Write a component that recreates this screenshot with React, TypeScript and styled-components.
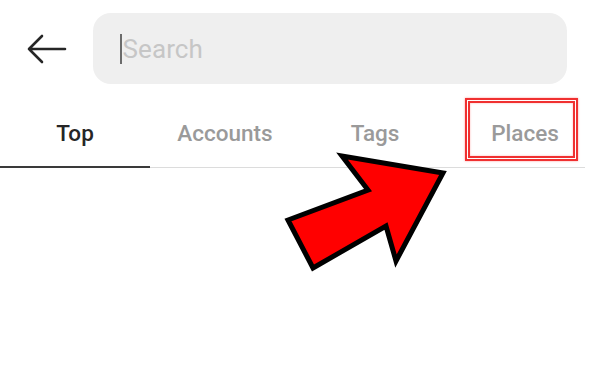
import React from "react";
import styled, { createGlobalStyle } from "styled-components";

const Global = createGlobalStyle`
  html, body { margin: 0; padding: 0; background: #ffffff; }
  body { font-family: Roboto, "Noto Sans", "Liberation Sans", sans-serif; }
`;

const Page = styled.div`
  position: relative;
  width: 600px;
  height: 390px;
  overflow: hidden;
  background: #ffffff;
`;

const Header = styled.div`
  display: flex;
  align-items: center;
  padding: 13px 33px 0 26px;
  height: 71px;
`;

const BackButton = styled.div`
  width: 42px;
  height: 30px;
  display: flex;
  align-items: center;
  margin-right: 25px;
`;

const SearchBox = styled.div`
  flex: 1;
  height: 71px;
  background: #efefef;
  border-radius: 18px;
  display: flex;
  align-items: center;
  padding-left: 27px;
  box-sizing: border-box;
`;

const Caret = styled.span`
  width: 1.5px;
  height: 30px;
  background: #6b6b6b;
  margin-right: 1px;
`;

const Placeholder = styled.span`
  font-size: 26px;
  color: #c6c6c6;
  font-weight: 400;
  letter-spacing: 0.1px;
`;

const TabBar = styled.div`
  display: flex;
  margin-top: 14px;
  margin-right: 15px;
  height: 70px;
  border-bottom: 1px solid #dcdcdc;
  box-sizing: border-box;
`;

const Tab = styled.div<{ $active?: boolean }>`
  position: relative;
  flex: 0 0 150px;
  display: flex;
  align-items: center;
  justify-content: center;
  font-size: 22.5px;
  font-weight: 500;
  color: ${(p) => (p.$active ? "#262626" : "#9a9a9a")};
  box-sizing: border-box;
  &::after {
    content: "";
    position: absolute;
    left: 0;
    right: 0;
    bottom: -1px;
    height: 2px;
    background: ${(p) => (p.$active ? "#3a3a3a" : "transparent")};
  }
`;

const Highlight = styled.div`
  position: absolute;
  left: 15px;
  top: 0;
  width: 113px;
  height: 63px;
  border: 5px double #f03030;
  box-sizing: border-box;
  box-shadow: 0 0 2px rgba(255, 90, 90, 0.6), inset 0 0 2px rgba(255, 90, 90, 0.5);
`;

const Pointer = styled.svg`
  position: absolute;
  left: 0;
  top: 0;
  pointer-events: none;
`;

export default function App() {
  return (
    <Page>
      <Global />
      <Header>
        <BackButton>
          <svg width="42" height="30" viewBox="0 0 42 30">
            <path
              d="M3 15 H39 M16 2 L3 15 L16 28"
              fill="none"
              stroke="#262626"
              strokeWidth="2.6"
              strokeLinecap="round"
              strokeLinejoin="round"
            />
          </svg>
        </BackButton>
        <SearchBox>
          <Caret />
          <Placeholder>Search</Placeholder>
        </SearchBox>
      </Header>
      <TabBar>
        <Tab $active>Top</Tab>
        <Tab>Accounts</Tab>
        <Tab>Tags</Tab>
        <Tab>
          Places
          <Highlight />
        </Tab>
      </TabBar>
      <Pointer width="600" height="390" viewBox="0 0 600 390">
        <polygon
          points="443,173 342,156 368,190 288,220 313,268 386,226 396,261"
          fill="#ff0000"
          stroke="#000000"
          strokeWidth="5"
          strokeLinejoin="miter"
          strokeMiterlimit="3"
        />
      </Pointer>
    </Page>
  );
}
